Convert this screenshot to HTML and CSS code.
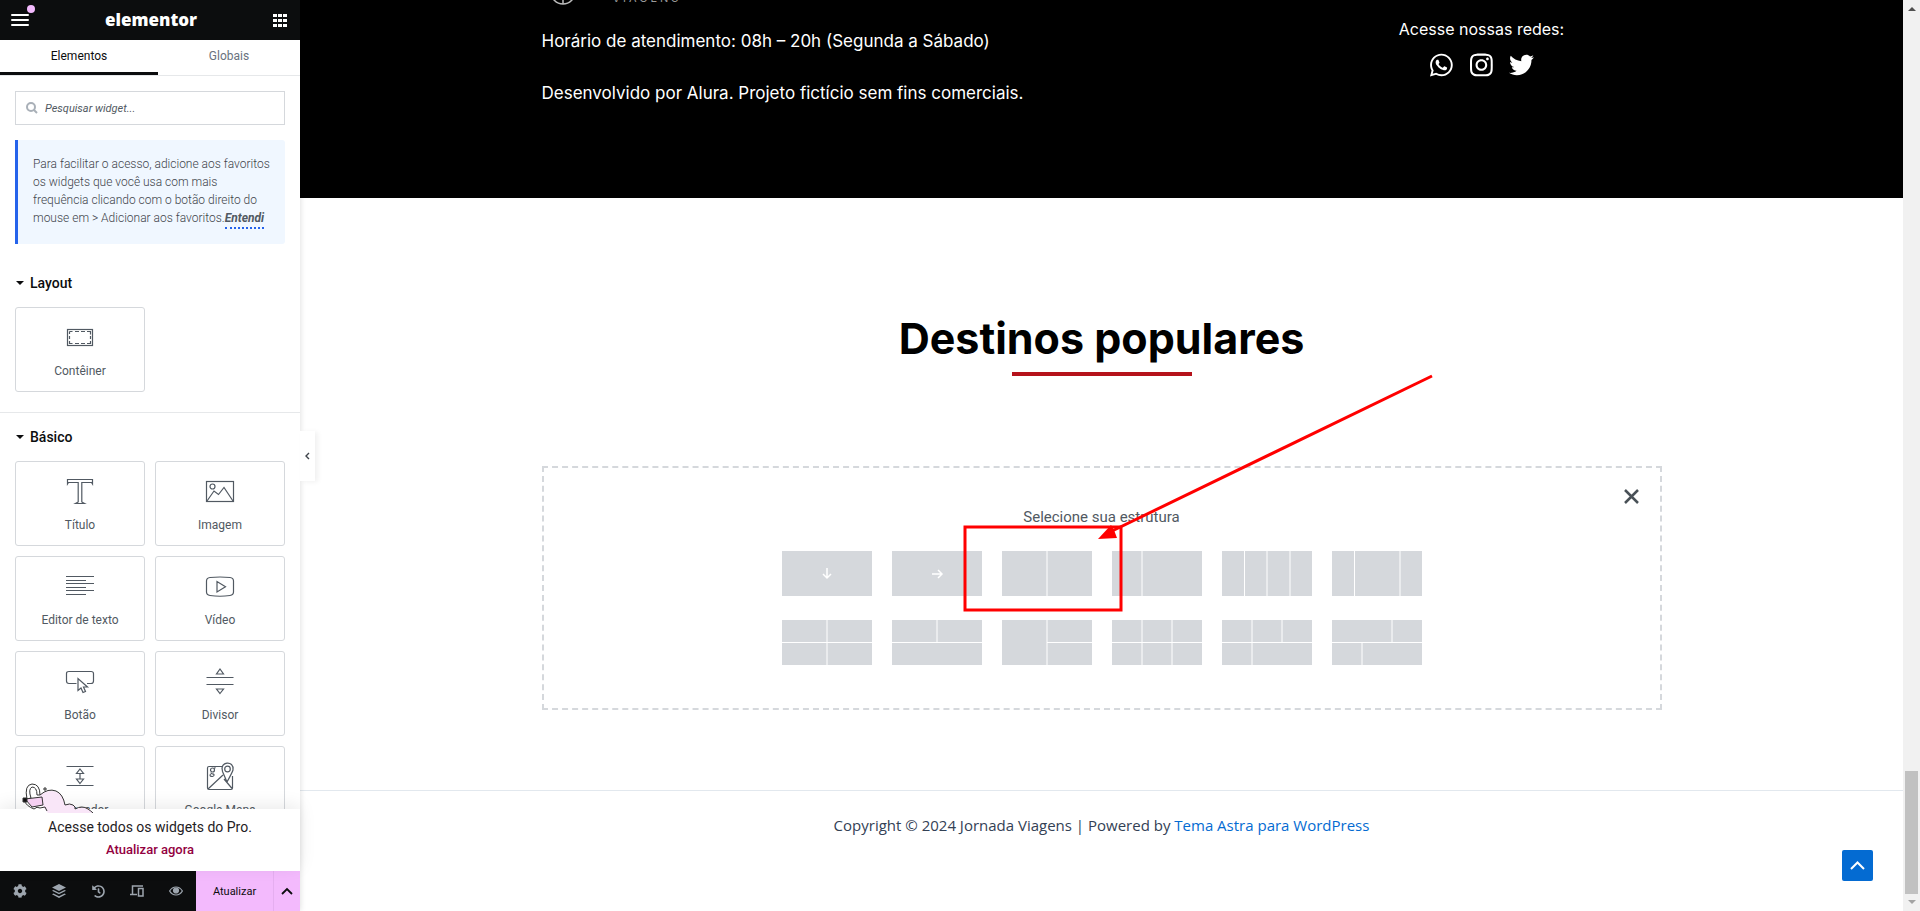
FILE: index.html
```html
<!DOCTYPE html>
<html lang="pt-BR">
<head>
<meta charset="utf-8">
<title>Elementor</title>
<link rel="stylesheet" href="styles.css">
</head>
<body>
<aside class="panel">
  <header class="panel-header">
    <button class="menu-btn" type="button" aria-label="Menu">
      <svg width="18" height="12" viewBox="0 0 18 12"><path d="M1 1h16M1 6h16M1 11h16" stroke="#fff" stroke-width="2" stroke-linecap="round"/></svg>
      <span class="menu-dot"></span>
    </button>
    <span class="brand">elementor</span>
    <button class="grid-btn" type="button" aria-label="Widgets">
      <svg width="14" height="14" viewBox="0 0 14 14" fill="#fff"><path d="M0 1h4v3H0zM5 1h4v3H5zM10 1h4v3h-4zM0 6h4v3H0zM5 6h4v3H5zM10 6h4v3h-4zM0 11h4v3H0zM5 11h4v3H5zM10 11h4v3h-4z"/></svg>
    </button>
  </header>
  <nav class="tabs">
    <button class="tab tab-active" type="button">Elementos</button>
    <button class="tab" type="button">Globais</button>
  </nav>
  <div class="panel-body">
    <div class="search">
      <svg width="12" height="12" viewBox="0 0 12 12" fill="none" stroke="#a9b0b8" stroke-width="2"><circle cx="5" cy="5" r="4"/><path d="M8 8l3 3"/></svg>
      <input class="search-input" type="text" placeholder="Pesquisar widget..." aria-label="Pesquisar widget">
    </div>
    <div class="notice">Para facilitar o acesso, adicione aos favoritos os widgets que você usa com mais frequência clicando com o botão direito do mouse em &gt; Adicionar aos favoritos.<a class="notice-link" href="#">Entendi</a></div>

    <section class="category">
      <h2 class="category-title"><span class="caret"></span>Layout</h2>
      <div class="widgets">
        <button class="widget" type="button">
          <svg class="icon" viewBox="0 0 28 28"><rect x="1.500" y="5.500" width="25" height="16"/><path d="M3.500 7.500h3M9 7.500h4M15 7.500h4M21 7.500h3.500v3M24.500 12v3M24.500 17v2.500H21M19 19.500h-4M13 19.500H9M6.500 19.500h-3V17M3.500 15v-3M3.500 10V7.500"/></svg>
          <span>Contêiner</span>
        </button>
      </div>
    </section>

    <section class="category">
      <h2 class="category-title"><span class="caret"></span>Básico</h2>
      <div class="widgets">
        <button class="widget" type="button">
          <svg class="icon" viewBox="0 0 28 28"><path d="M1.500 6V1.500h25V6l-1-1.500h-9.700V24l2.700 1.500h-9L12.200 24V4.500H2.500z"/></svg>
          <span>Título</span>
        </button>
        <button class="widget" type="button">
          <svg class="icon" viewBox="0 0 28 28"><rect x=".500" y="3.500" width="27" height="20"/><circle cx="6.500" cy="8.500" r="2.500"/><path d="M1 23l7-10 4.500 3.500L18 9.500 27 23"/></svg>
          <span>Imagem</span>
        </button>
        <button class="widget" type="button">
          <svg class="icon" viewBox="0 0 28 28"><path d="M0 3.500h28M0 7.500h20M0 10.500h28M0 14.500h20M0 17.500h28M0 21.500h20"/></svg>
          <span>Editor de texto</span>
        </button>
        <button class="widget" type="button">
          <svg class="icon" viewBox="0 0 28 28"><path d="M4 4.500Q14 3.500 24 4.500Q27.500 5 27.500 8v11q0 3-3.500 3.500-10 1.500-20 0Q.500 22 .500 19V8Q.500 5 4 4.500zM11 8.500v10.500l8.500-5.200z"/></svg>
          <span>Vídeo</span>
        </button>
        <button class="widget" type="button">
          <svg class="icon" viewBox="0 0 28 28"><path d="M10.500 15.500H3Q.500 15.500.500 13V5.500Q.500 3.500 3 3.500h22q2.500 0 2.500 2V13q0 2.500-2.500 2.500h-4M12 10.500v12l3-2.500 2 4.500 2.500-1-2-4.500h4z"/></svg>
          <span>Botão</span>
        </button>
        <button class="widget" type="button">
          <svg class="icon" viewBox="0 0 28 28"><path d="M.500 9.500h27M.500 16.500h27M14 1l3.500 5h-7zM14 25.500l3.500-4.500h-7z"/></svg>
          <span>Divisor</span>
        </button>
        <button class="widget" type="button">
          <svg class="icon" viewBox="0 0 28 28"><path d="M.500 3.500h27M.500 22.500h27M14 6l3.500 4.500h-7zM14 20.500l3.500-4.500h-7zM14 10v6"/></svg>
          <span>Espaçador</span>
        </button>
        <button class="widget" type="button">
          <svg class="icon" viewBox="0 0 28 28"><path d="M17 3.500H3q-1.500 0-1.500 1.500v20q0 1.500 1.500 1.500h22q1.500 0 1.500-1.500V13M21 19L16.500 8.500C13-2 28.500-3 27 7q-.500 2-6 12M2 26l15-14M18 16l8.500 10"/><circle cx="21.500" cy="6" r="2.800"/><circle cx="6.500" cy="7" r="2"/><path d="M9.500 4.500l-1.500 1M5 9.500q0 1.500 2.500 1.500 1.500 1.500-1 2.500-3.500 0-2-2.500"/></svg>
          <span>Google Maps</span>
        </button>
      </div>
    </section>
  </div>

  <div class="promo">
    <svg class="promo-art" width="76" height="32" viewBox="0 0 76 32" fill="none" stroke="#333" stroke-width="1">
      <path d="M0 32q8-9 14-10 12 0 20 10z" fill="#fff" stroke="none"/>
      <path d="M18 14Q26 8 35 11q6 2 8 13 4-3 8 0 3 2 2 5 7-5 13-1 4 2 5 4L66 32H26Q18 24 18 14z" fill="#f9e6f8" stroke="none"/>
      <path d="M18 14Q26 7 34 10q7 3 9 14 5-2 8 0 3 2 2 4 7-4 13 0 3 2 5 4"/>
      <path d="M5 18Q2 4 10 3q8 0 8 11h-3Q15 6 10 6 6 8 9 17z" fill="#fff"/>
      <path d="M3 18l17-2 1 8-11 2z" fill="#f5d0f2"/>
      <path d="M2 19q2 6 10 9 3-3 6-1l5-1 2 4"/>
      <path d="M1 17h4v4H1z" fill="#111"/><path d="M23 6v4M21 8h4"/>
    </svg>
    <p class="promo-text">Acesse todos os widgets do Pro.</p>
    <a class="promo-link" href="#">Atualizar agora</a>
  </div>

  <footer class="toolbar">
    <button class="tool" type="button" aria-label="Configurações"><svg width="14" height="14" viewBox="0 0 512 512"><path d="M487.400 315.700l-42.600-24.600c4.300-23.200 4.300-47 0-70.200l42.600-24.600c4.900-2.800 7.100-8.600 5.500-14-11.100-35.600-30-67.800-54.700-94.600-3.800-4.100-10-5.100-14.800-2.300L380.800 110c-17.900-15.400-38.500-27.300-60.800-35.100V25.800c0-5.600-3.900-10.500-9.400-11.700-36.700-8.200-74.300-7.800-109.200 0-5.500 1.200-9.400 6.100-9.400 11.700V75c-22.200 7.900-42.800 19.800-60.800 35.100L88.700 85.500c-4.900-2.800-11-1.900-14.800 2.300-24.700 26.700-43.600 58.900-54.700 94.600-1.700 5.400.6 11.200 5.500 14L67.300 221c-4.300 23.200-4.300 47 0 70.200l-42.600 24.600c-4.900 2.800-7.100 8.600-5.500 14 11.100 35.600 30 67.800 54.700 94.600 3.800 4.100 10 5.100 14.800 2.300l42.600-24.600c17.900 15.400 38.500 27.300 60.800 35.100v49.200c0 5.600 3.900 10.500 9.400 11.700 36.700 8.200 74.300 7.800 109.200 0 5.500-1.200 9.400-6.100 9.400-11.700v-49.200c22.200-7.900 42.800-19.800 60.800-35.100l42.600 24.600c4.900 2.800 11 1.900 14.800-2.300 24.700-26.700 43.600-58.900 54.700-94.600 1.500-5.500-.7-11.300-5.600-14.100zM256 336c-44.100 0-80-35.900-80-80s35.900-80 80-80 80 35.900 80 80-35.900 80-80 80z"/></svg></button>
    <button class="tool" type="button" aria-label="Estrutura"><svg width="14" height="14" viewBox="0 0 14 14"><path d="M7 0l7 3.500L7 7 0 3.500zM1.500 6L7 8.700 12.500 6l1.500.8-7 3.500-7-3.500zM1.500 9.500L7 12.200l5.500-2.700 1.500.7L7 14l-7-3.800z"/></svg></button>
    <button class="tool" type="button" aria-label="Histórico"><svg width="13" height="13" viewBox="0 0 512 512"><path d="M504 255.500c.3 136.600-111.200 248.400-247.800 248.500-59 0-113.200-20.500-155.800-54.900-11.100-8.900-11.900-25.500-1.800-35.600l11.300-11.300c8.600-8.600 22.400-9.600 31.900-2C173.100 425.100 212.900 440 256 440c101.700 0 184-82.300 184-184 0-101.700-82.300-184-184-184-48.800 0-93.100 19-126.100 49.900l50.800 50.800c10.100 10.100 2.900 27.300-11.300 27.300H24c-8.800 0-16-7.200-16-16V38.600c0-14.300 17.200-21.400 27.300-11.300l49.400 49.400C129.200 34.100 189.600 8 256 8c136.800 0 247.700 110.800 248 247.500zm-180.900 78.800l9.800-12.600c8.100-10.500 6.300-25.500-4.200-33.700L288 256.300V152c0-13.300-10.700-24-24-24h-16c-13.300 0-24 10.700-24 24v135.700l65.400 50.900c10.500 8.100 25.500 6.300 33.700-4.300z"/></svg></button>
    <button class="tool" type="button" aria-label="Modo responsivo"><svg width="14" height="12" viewBox="0 0 14 12" fill="none" stroke="#9da5ae" stroke-width="1.500"><path d="M2.500 9V1H13M0 9.500h7M8.500 3.500h4.500v7.500H8.500z"/></svg></button>
    <button class="tool" type="button" aria-label="Pré-visualizar"><svg width="14" height="10" viewBox="0 0 14 10" fill="none" stroke="#9da5ae" stroke-width="1.200"><path d="M.600 5Q3 1 7 1t6.400 4Q11 9 7 9T.600 5z"/><circle cx="7" cy="4.500" r="2.500" fill="#9da5ae"/></svg></button>
    <button class="publish" type="button">Atualizar</button>
    <button class="publish-more" type="button" aria-label="Opções de salvamento"><svg width="12" height="8" viewBox="0 0 12 8"><path d="M1 7l5-5 5 5" fill="none" stroke="#0c0d0e" stroke-width="1.800"/></svg></button>
  </footer>
  <button class="collapse" type="button" aria-label="Ocultar painel"><svg width="5" height="8" viewBox="0 0 5 8"><path d="M4 1L1 4l3 3" fill="none" stroke="#3f444b" stroke-width="1.400"/></svg></button>
</aside>

<main class="preview">
  <section class="site-info">
    <div class="site-info-inner">
      <div class="info-left">
        <div class="site-logo">
          <svg width="26" height="26" viewBox="0 0 26 26" fill="none" stroke="#bbb" stroke-width="1.500"><circle cx="13" cy="13" r="12"/><path d="M13 1v24"/></svg>
          <span class="site-logo-word">VIAGENS</span>
        </div>
        <p class="info-line">Horário de atendimento: 08h – 20h (Segunda a Sábado)</p>
        <p class="info-line">Desenvolvido por Alura. Projeto fictício sem fins comerciais.</p>
      </div>
      <div class="info-right">
        <p class="social-title">Acesse nossas redes:</p>
        <div class="social">
          <a href="#" aria-label="WhatsApp"><svg viewBox="0 0 448 512"><path d="M380.900 97.100C339 55.100 283.200 32 223.900 32c-122.400 0-222 99.600-222 222 0 39.100 10.200 77.300 29.600 111L0 480l117.700-30.900c32.400 17.700 68.900 27 106.100 27h.1c122.300 0 224.100-99.600 224.100-222 0-59.300-25.200-115-67.100-157zm-157 341.600c-33.200 0-65.700-8.900-94-25.700l-6.700-4-69.800 18.300L72 359.200l-4.400-7c-18.500-29.400-28.200-63.300-28.200-98.200 0-101.700 82.800-184.500 184.600-184.500 49.300 0 95.600 19.200 130.400 54.100 34.800 34.900 56.200 81.200 56.100 130.500 0 101.800-84.900 184.600-186.600 184.600zm101.200-138.200c-5.500-2.800-32.800-16.200-37.900-18-5.100-1.900-8.800-2.800-12.500 2.800-3.700 5.600-14.300 18-17.600 21.800-3.200 3.700-6.500 4.200-12 1.400-32.600-16.300-54-29.100-75.500-66-5.700-9.800 5.700-9.100 16.300-30.300 1.800-3.700.9-6.900-.5-9.700-1.400-2.800-12.500-30.100-17.100-41.200-4.500-10.800-9.100-9.300-12.500-9.500-3.200-.2-6.900-.2-10.600-.2-3.700 0-9.700 1.400-14.800 6.900-5.100 5.600-19.400 19-19.400 46.300 0 27.300 19.900 53.700 22.600 57.400 2.800 3.700 39.100 59.700 94.800 83.800 35.200 15.200 49 16.500 66.600 13.900 10.700-1.600 32.800-13.400 37.400-26.400 4.600-13 4.600-24.100 3.200-26.400-1.300-2.500-5-3.900-10.500-6.600z"/></svg></a>
          <a href="#" aria-label="Instagram"><svg viewBox="0 0 448 512"><path d="M224.100 141c-63.600 0-114.900 51.300-114.900 114.900s51.300 114.900 114.900 114.900S339 319.500 339 255.900 287.700 141 224.100 141zm0 189.600c-41.100 0-74.700-33.500-74.700-74.700s33.500-74.700 74.700-74.700 74.700 33.500 74.700 74.700-33.600 74.700-74.700 74.700zm146.400-194.300c0 14.900-12 26.800-26.800 26.800-14.900 0-26.800-12-26.800-26.800s12-26.800 26.800-26.800 26.800 12 26.800 26.800zm76.100 27.200c-1.700-35.900-9.900-67.700-36.200-93.900-26.200-26.200-58-34.400-93.900-36.200-37-2.100-147.900-2.100-184.900 0-35.800 1.700-67.600 9.900-93.900 36.100s-34.400 58-36.200 93.900c-2.100 37-2.100 147.900 0 184.900 1.700 35.900 9.900 67.700 36.200 93.900s58 34.400 93.900 36.200c37 2.100 147.900 2.100 184.900 0 35.900-1.700 67.700-9.900 93.900-36.200 26.200-26.200 34.400-58 36.200-93.900 2.100-37 2.100-147.800 0-184.800zM398.800 388c-7.800 19.600-22.900 34.700-42.600 42.600-29.500 11.700-99.500 9-132.100 9s-102.700 2.600-132.100-9c-19.600-7.800-34.700-22.900-42.600-42.600-11.700-29.500-9-99.500-9-132.100s-2.600-102.700 9-132.100c7.800-19.600 22.900-34.700 42.600-42.600 29.500-11.700 99.500-9 132.100-9s102.700-2.600 132.100 9c19.600 7.800 34.700 22.900 42.600 42.600 11.700 29.500 9 99.500 9 132.100s2.700 102.700-9 132.100z"/></svg></a>
          <a href="#" aria-label="Twitter"><svg viewBox="0 0 512 512"><path d="M459.370 151.716c.325 4.548.325 9.097.325 13.645 0 138.720-105.583 298.558-298.558 298.558-59.452 0-114.680-17.219-161.137-47.106 8.447.974 16.568 1.299 25.340 1.299 49.055 0 94.213-16.568 130.274-44.832-46.132-.975-84.792-31.188-98.112-72.772 6.498.974 12.995 1.624 19.818 1.624 9.421 0 18.843-1.300 27.614-3.573-48.081-9.747-84.143-51.980-84.143-102.985v-1.299c13.969 7.797 30.214 12.670 47.431 13.319-28.264-18.843-46.781-51.005-46.781-87.391 0-19.492 5.197-37.360 14.294-52.954 51.655 63.675 129.300 105.258 216.365 109.807-1.624-7.797-2.599-15.918-2.599-24.040 0-57.828 46.782-104.934 104.934-104.934 30.213 0 57.502 12.670 76.670 33.137 23.715-4.548 46.456-13.320 66.599-25.340-7.798 24.366-24.366 44.833-46.132 57.827 21.117-2.273 41.584-8.122 60.426-16.243-14.292 20.791-32.161 39.308-52.628 54.253z"/></svg></a>
        </div>
      </div>
    </div>
  </section>

  <section class="destinations">
    <h1 class="heading">Destinos populares</h1>
    <div class="heading-rule"></div>
    <div class="picker">
      <button class="picker-close" type="button" aria-label="Fechar"><svg width="15" height="15" viewBox="0 0 15 15"><path d="M1 1l13 13M14 1L1 14" stroke="#495157" stroke-width="2.500"/></svg></button>
      <p class="picker-title">Selecione sua estrutura</p>
      <div class="structures">
        <button class="structure" type="button" aria-label="Coluna"><svg viewBox="0 0 90 45"><path class="arrow" d="M45 17v10M41 23l4 4 4-4"/></svg></button>
        <button class="structure" type="button" aria-label="Linha"><svg viewBox="0 0 90 45"><path class="arrow" d="M40 23h10M46 19l4 4-4 4"/></svg></button>
        <button class="structure" type="button" aria-label="50 50"><svg viewBox="0 0 90 45"><path d="M45 0v45"/></svg></button>
        <button class="structure" type="button" aria-label="33 66"><svg viewBox="0 0 90 45"><path d="M30 0v45"/></svg></button>
        <button class="structure" type="button" aria-label="25 25 25 25"><svg viewBox="0 0 90 45"><path d="M22.500 0v45M45 0v45M68 0v45"/></svg></button>
        <button class="structure" type="button" aria-label="25 50 25"><svg viewBox="0 0 90 45"><path d="M22.500 0v45M68 0v45"/></svg></button>
        <button class="structure" type="button" aria-label="50 50 50 50"><svg viewBox="0 0 90 45"><path d="M45 0v45M0 22.500h90"/></svg></button>
        <button class="structure" type="button" aria-label="50 50 100"><svg viewBox="0 0 90 45"><path d="M45 0v22.500M0 22.500h90"/></svg></button>
        <button class="structure" type="button" aria-label="Coluna e duas linhas"><svg viewBox="0 0 90 45"><path d="M45 0v45M45 22.500h45"/></svg></button>
        <button class="structure" type="button" aria-label="33 33 33 33 33 33"><svg viewBox="0 0 90 45"><path d="M30 0v45M60 0v45M0 22.500h90"/></svg></button>
        <button class="structure" type="button" aria-label="33 33 33 33 66"><svg viewBox="0 0 90 45"><path d="M30 0v45M60 0v22.500M0 22.500h90"/></svg></button>
        <button class="structure" type="button" aria-label="66 33 33 66"><svg viewBox="0 0 90 45"><path d="M60 0v22.500M30 22.500v22.500M0 22.500h90"/></svg></button>
        <svg class="pointer" width="640" height="114" viewBox="0 0 640 114" fill="none" stroke="#f00" stroke-width="3">
          <rect x="183" y="-24" width="156" height="83"/>
          <path d="M650-175L328-19"/>
          <path d="M316-12l13-14 3 5 3 8z" fill="#f00" stroke="none"/>
        </svg>
      </div>
    </div>
  </section>

  <footer class="site-footer">
    <p class="copyright">Copyright © 2024 Jornada Viagens | Powered by <a href="#">Tema Astra para WordPress</a></p>
  </footer>
  <button class="to-top" type="button" aria-label="Voltar ao topo"><svg width="15" height="9" viewBox="0 0 15 9"><path d="M1 8l6.500-6.500L14 8" fill="none" stroke="#fff" stroke-width="2"/></svg></button>
</main>

<div class="scrollbar" aria-hidden="true">
  <span class="scroll-up"></span>
  <span class="scroll-track"><span class="scroll-thumb"></span></span>
  <span class="scroll-down"></span>
</div>
</body>
</html>
```
FILE: styles.css
```css
* { box-sizing: border-box; }
body {
  margin: 0;
  height: 100vh;
  display: flex;
  overflow: hidden;
  background: #fff;
  font-family: Roboto, "Liberation Sans", sans-serif;
}
button { margin: 0; padding: 0; border: 0; background: none; font: inherit; color: inherit; }
p, h1, h2 { margin: 0; }
svg { display: block; }
a { text-decoration: none; }

/* Editor panel */
.panel {
  position: relative;
  z-index: 1;
  flex: 0 0 300px;
  display: flex;
  flex-direction: column;
  background: #fff;
  box-shadow: 0 0 6px rgba(0, 0, 0, .15);
}
.panel-header {
  flex: 0 0 40px;
  display: flex;
  align-items: center;
  justify-content: space-between;
  padding: 0 13px 0 11px;
  background: #0c0d0e;
}
.menu-btn { position: relative; }
.menu-dot {
  position: absolute;
  top: -9px;
  right: -6px;
  width: 8px;
  height: 8px;
  border-radius: 50%;
  background: #f3bafd;
}
.brand { color: #fff; font: 800 17px/20px "Open Sans", sans-serif; }
.tabs {
  flex: 0 0 36px;
  display: flex;
  border-bottom: 1px solid #e6e8ea;
}
.tab { flex: 1; border-bottom: 3px solid transparent; font-size: 12px; color: #69727d; }
.tab-active { flex: 0 0 158px; border-color: #0c0d0e; color: #0c0d0e; }
.panel-body { flex: 1; overflow: hidden; padding-top: 15px; }
.search {
  display: flex;
  align-items: center;
  gap: 7px;
  height: 34px;
  margin: 0 15px 15px;
  padding: 0 10px;
  border: 1px solid #d5d8dc;
}
.search-input {
  flex: 1;
  min-width: 0;
  padding: 0;
  border: 0;
  outline: 0;
  background: none;
  font: italic 11px Roboto, sans-serif;
}
.search-input::placeholder { color: #515962; opacity: 1; }
.notice {
  margin: 0 15px;
  padding: 15px 12px 17px 15px;
  border-left: 3px solid #2563eb;
  border-radius: 0 3px 3px 0;
  background: #f0f7ff;
  font-size: 12px;
  line-height: 18px;
  font-weight: 300;
  color: #3f444b;
}
.notice-link {
  padding-bottom: 2px;
  border-bottom: 2px dotted #2563eb;
  font-weight: 700;
  font-style: italic;
  color: #515962;
}
.category { padding: 30px 15px 20px; }
.category + .category { padding-top: 15px; border-top: 1px solid #e6e8ea; }
.category-title {
  display: flex;
  align-items: center;
  gap: 6px;
  height: 18px;
  margin-bottom: 15px;
  padding-left: 1px;
  font-size: 14px;
  font-weight: 500;
  color: #0c0d0e;
}
.caret { border: 4px solid transparent; border-top-color: #0c0d0e; border-bottom: 0; }
.widgets { display: grid; grid-template-columns: 1fr 1fr; gap: 10px; }
.widget {
  display: flex;
  flex-direction: column;
  align-items: center;
  gap: 10px;
  height: 85px;
  padding-top: 16px;
  border: 1px solid #d5d8dc;
  border-radius: 3px;
  font-size: 12px;
  line-height: 18px;
  color: #515962;
}
.icon { width: 28px; height: 28px; fill: none; stroke: #515962; stroke-width: 1.2; overflow: visible; }
.promo {
  position: relative;
  display: flex;
  flex-direction: column;
  align-items: center;
  gap: 4px;
  height: 62px;
  padding-top: 8px;
  background: #fff;
  box-shadow: 0 -4px 16px rgba(0, 0, 0, .08);
}
.promo-art { position: absolute; left: 22px; top: -28px; }
.promo-text { position: relative; font-size: 14px; line-height: 20px; color: #1f2124; }
.promo-link { font-size: 13px; line-height: 18px; font-weight: 500; color: #93003f; }
.toolbar { display: flex; height: 40px; background: #0c0d0e; }
.tool { flex: 1; display: flex; align-items: center; justify-content: center; fill: #9da5ae; }
.publish { width: 77px; background: #f3bafd; font-size: 11px; font-weight: 400; color: #0c0d0e; }
.publish-more {
  display: flex;
  align-items: center;
  justify-content: center;
  width: 27px;
  border-left: 1px solid #e5aef0;
  background: #f3bafd;
}
.collapse {
  position: absolute;
  left: 100%;
  top: 431px;
  display: flex;
  align-items: center;
  justify-content: center;
  width: 15px;
  height: 50px;
  background: #fff;
  box-shadow: 3px 1px 5px rgba(0, 0, 0, .06);
}

/* Page preview */
.preview { position: relative; flex: 1; min-width: 0; overflow: hidden; }
.site-info { background: #000; color: #fff; font: 17px/26px Inter, sans-serif; }
.site-info-inner {
  display: flex;
  justify-content: space-between;
  max-width: 1120px;
  min-height: 198px;
  margin: 0 auto;
}
.info-left { display: flex; flex-direction: column; gap: 26px; }
.site-logo {
  display: flex;
  align-items: flex-end;
  gap: 37px;
  height: 5px;
  margin-bottom: -3px;
  padding-left: 8px;
  overflow: hidden;
}
.site-logo-word { color: #999; font-size: 11px; line-height: 14px; letter-spacing: 3px; }
.info-right {
  display: flex;
  flex-direction: column;
  align-items: center;
  gap: 10px;
  width: 360px;
  padding-top: 16px;
}
.social-title { font-size: 16px; }
.social { display: flex; gap: 15px; }
.social a { display: flex; justify-content: center; width: 25px; }
.social svg { height: 26px; fill: #fff; }
.destinations { padding: 116px 20px 80px; }
.heading { text-align: center; font: 700 43px/48px Inter, sans-serif; color: #000; }
.heading-rule { width: 180px; height: 4px; margin: 10px auto 90px; background: #b5121b; }
.picker {
  position: relative;
  max-width: 1120px;
  margin: 0 auto;
  padding: 39px 0 43px;
  border: 2px dashed #d5d8dc;
}
.picker-close { position: absolute; right: 21px; top: 21px; }
.picker-title { margin-bottom: 24px; text-align: center; font-size: 15px; line-height: 20px; color: #515962; }
.structures {
  position: relative;
  display: grid;
  grid-template-columns: repeat(6, 90px);
  gap: 24px 20px;
  justify-content: center;
  width: 640px;
  margin: 0 auto;
}
.structure { background: #d5d8dc; }
.structure svg { width: 90px; height: 45px; fill: none; stroke: #fff; stroke-width: 1; }
.structure .arrow { stroke-width: 1.5; }
.pointer { position: absolute; left: 0; top: 0; overflow: visible; pointer-events: none; }
.site-footer { padding: 22px 20px; border-top: 1px solid #e2e8ee; }
.copyright { text-align: center; font: 15px/24px "Open Sans", sans-serif; color: #334155; }
.copyright a { color: #046bd2; }
.to-top {
  position: absolute;
  right: 30px;
  bottom: 30px;
  display: flex;
  align-items: center;
  justify-content: center;
  width: 31px;
  height: 31px;
  border-radius: 2px;
  background: #046bd2;
}

/* Scrollbar */
.scrollbar {
  flex: 0 0 17px;
  display: flex;
  flex-direction: column;
  align-items: center;
  justify-content: space-between;
  padding: 7px 0;
  background: #f1f1f1;
}
.scroll-up { border: 4px solid transparent; border-bottom-color: #505050; border-top: 0; }
.scroll-track { flex: 1; display: flex; align-items: flex-end; padding: 6px 0; }
.scroll-thumb { width: 13px; height: 123px; background: #c1c1c1; }
.scroll-down { border: 4px solid transparent; border-top-color: #a3a3a3; border-bottom: 0; }
```
